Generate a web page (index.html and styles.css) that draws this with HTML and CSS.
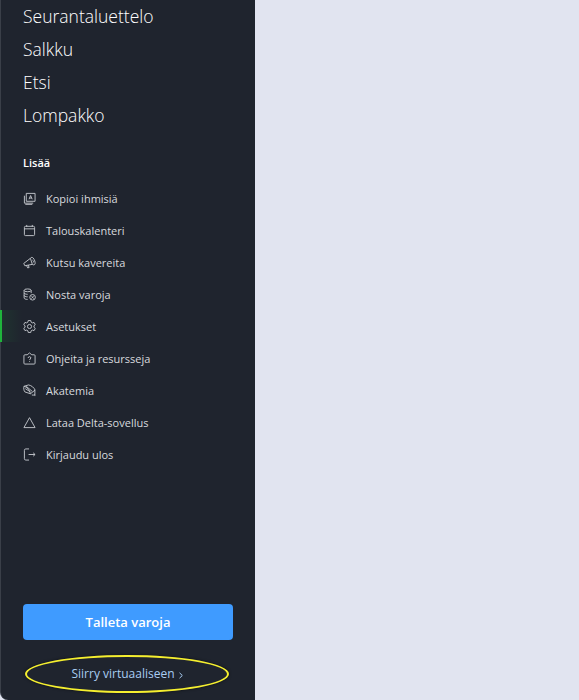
FILE: index.html
```html
<!DOCTYPE html>
<html lang="fi">
<head>
  <meta charset="UTF-8">
  <meta name="viewport" content="width=device-width, initial-scale=1.0">
  <title>Valikko</title>
  <link rel="stylesheet" href="styles.css">
</head>
<body>
  <aside class="sidebar">
    <nav class="main-menu">
      <a href="#">Seurantaluettelo</a>
      <a href="#">Salkku</a>
      <a href="#">Etsi</a>
      <a href="#">Lompakko</a>
    </nav>

    <h2 class="more-title">Lisää</h2>

    <nav class="more-menu">
      <a href="#">
        <svg viewBox="0 0 14 14"><path d="M3.500 1.500h9.500v8.500H3.500z"/><path d="M1.500 4v8h9.500M2.500 13.300h7.500"/><path d="M6.500 7.800 8.200 3.800l1.700 4M7.100 6.500h2.200"/></svg>
        Kopioi ihmisiä
      </a>
      <a href="#">
        <svg viewBox="0 0 14 14"><rect x="1.500" y="2.500" width="11" height="10" rx="1.200"/><path d="M1.500 5.200h11M4 1v2M10 1v2"/></svg>
        Talouskalenteri
      </a>
      <a href="#">
        <svg viewBox="0 0 14 14"><path d="M.8 8 8 2.500l2 6.500L2 10.500z"/><path d="M3.800 10.200 5 12.800l1.600-.4-1-2.700"/><path d="M8 2.500c1-1.500 2.200-1.200 3-.3 1.500 1.700 2.300 4.600 2 6.200-.2 1.200-1.800 1.600-3 .6"/><path d="M10.300 4.500c1 .5 1.300 1.800.7 2.500"/></svg>
        Kutsu kavereita
      </a>
      <a href="#">
        <svg viewBox="0 0 14 14"><ellipse cx="5" cy="2.500" rx="3.800" ry="1.500"/><path d="M1.200 2.500v8.300c0 .8 1.600 1.500 3.800 1.500M8.800 2.500v3M1.200 5.300c0 .8 1.600 1.500 3.800 1.500M1.200 8c0 .8 1.600 1.500 3.800 1.500"/><circle cx="10.300" cy="10" r="3"/><path d="M9 8.700l2.600 2.600M11.600 8.700 9 11.300"/></svg>
        Nosta varoja
      </a>
      <a href="#" class="active">
        <svg viewBox="0 0 14 14"><path d="M5.700 1h2.600l.4 1.800 1.400.8 1.800-.5 1.300 2.300-1.400 1.300v1.600l1.400 1.300-1.300 2.300-1.800-.5-1.400.8-.4 1.800H5.700l-.4-1.800-1.400-.8-1.800.5L.8 9.600l1.400-1.300V6.700L.8 5.400l1.300-2.300 1.800.5 1.400-.8z" transform="translate(0 -.5)"/><circle cx="7" cy="7" r="2.200"/></svg>
        Asetukset
      </a>
      <a href="#">
        <svg viewBox="0 0 14 14"><path d="M4.500 3H2a1 1 0 0 0-1 1v8a1 1 0 0 0 1 1h10a1 1 0 0 0 1-1V4a1 1 0 0 0-1-1H9.500L7 1z"/><path d="M5.500 6.500C5.500 5.600 6.200 5 7 5s1.500.6 1.500 1.400C8.500 7.500 7 7.500 7 8.700M7 10v.8"/></svg>
        Ohjeita ja resursseja
      </a>
      <a href="#">
        <svg viewBox="0 0 14 14"><path d="M1 2.500 6 1c3 .5 6 3 7 5.500L8 10.500 2 8.500C.8 7 .6 4.500 1 2.500z"/><path d="M1 2.500c3 .5 6 3.500 7 8M2.500 5 8 8.500M3.500 2.500 10 8"/><path d="M12.800 6.500v6.500M9.500 11.800c1 .3 2 .3 3.300-.3"/></svg>
        Akatemia
      </a>
      <a href="#">
        <svg viewBox="0 0 14 14"><path d="M7 1.800 13 12.500H1z"/></svg>
        Lataa Delta-sovellus
      </a>
      <a href="#">
        <svg viewBox="0 0 14 14"><path d="M6.500 1H3a1.500 1.500 0 0 0-1.500 1.500v9A1.500 1.500 0 0 0 3 13h3.500"/><path d="M6 7h7M11 5.200 13 7l-2 1.800"/></svg>
        Kirjaudu ulos
      </a>
    </nav>

    <div class="actions">
      <button type="button" class="deposit">Talleta varoja</button>
      <a href="#" class="virtual">Siirry virtuaaliseen<svg class="chevron" viewBox="0 0 4 7"><path d="M.5.800 3.300 3.500.5 6.200"/></svg></a>
      <span class="highlight"></span>
    </div>
  </aside>
</body>
</html>
```

FILE: styles.css
```css
* {
  box-sizing: border-box;
  margin: 0;
  padding: 0;
}

body {
  height: 700px;
  overflow: hidden;
  background: #e1e4f0;
  font-family: "Open Sans", Arial, sans-serif;
}

a {
  text-decoration: none;
}

/* Sivupalkki */
.sidebar {
  display: flex;
  flex-direction: column;
  width: 255px;
  height: 700px;
  background: #1f242e;
  border-left: 1px solid #3a3f48;
  border-bottom-left-radius: 8px;
}

.main-menu {
  display: flex;
  flex-direction: column;
  padding-left: 22px;
}

.main-menu a {
  height: 33px;
  line-height: 33px;
  color: #fff;
  font-size: 17.5px;
  font-weight: 300;
}

.more-title {
  margin-top: 22px;
  padding-left: 22px;
  color: #fff;
  font-size: 11px;
  font-weight: 600;
  line-height: 18px;
}

.more-menu {
  display: flex;
  flex-direction: column;
  margin-top: 10px;
}

.more-menu a {
  display: flex;
  align-items: center;
  gap: 10px;
  height: 32px;
  padding-left: 22px;
  color: #d8dade;
  font-size: 11px;
}

.more-menu svg {
  flex: none;
  width: 13px;
  height: 13px;
  fill: none;
  stroke: #c4c7cc;
  stroke-width: 1;
}

.more-menu a.active {
  margin-left: -1px;
  padding-left: 21px;
  border-left: 2px solid #1fb53c;
  background: linear-gradient(90deg, rgba(31, 181, 60, 0.1), rgba(31, 181, 60, 0) 20px);
}

/* Alaosan painikkeet */
.actions {
  position: relative;
  margin-top: auto;
  padding: 0 22px 11px;
}

.deposit {
  display: block;
  width: 210px;
  height: 36px;
  background: #3f9bff;
  color: #fff;
  border: none;
  border-radius: 4px;
  font-family: inherit;
  font-size: 13px;
  font-weight: 600;
}

.virtual {
  display: flex;
  justify-content: center;
  align-items: center;
  gap: 4px;
  margin-top: 18px;
  padding-right: 2px;
  color: #a9cdf3;
  font-size: 12px;
  line-height: 31px;
}

.chevron {
  width: 4px;
  height: 7px;
  margin-top: 3px;
  fill: none;
  stroke: #a9cdf3;
  stroke-width: 1;
}

.highlight {
  position: absolute;
  left: 24px;
  bottom: 7px;
  width: 204px;
  height: 38px;
  border: 2px solid #f5ef2f;
  border-radius: 50%;
  box-shadow: 0 0 3px rgba(0, 0, 0, 0.6);
  pointer-events: none;
}
```
